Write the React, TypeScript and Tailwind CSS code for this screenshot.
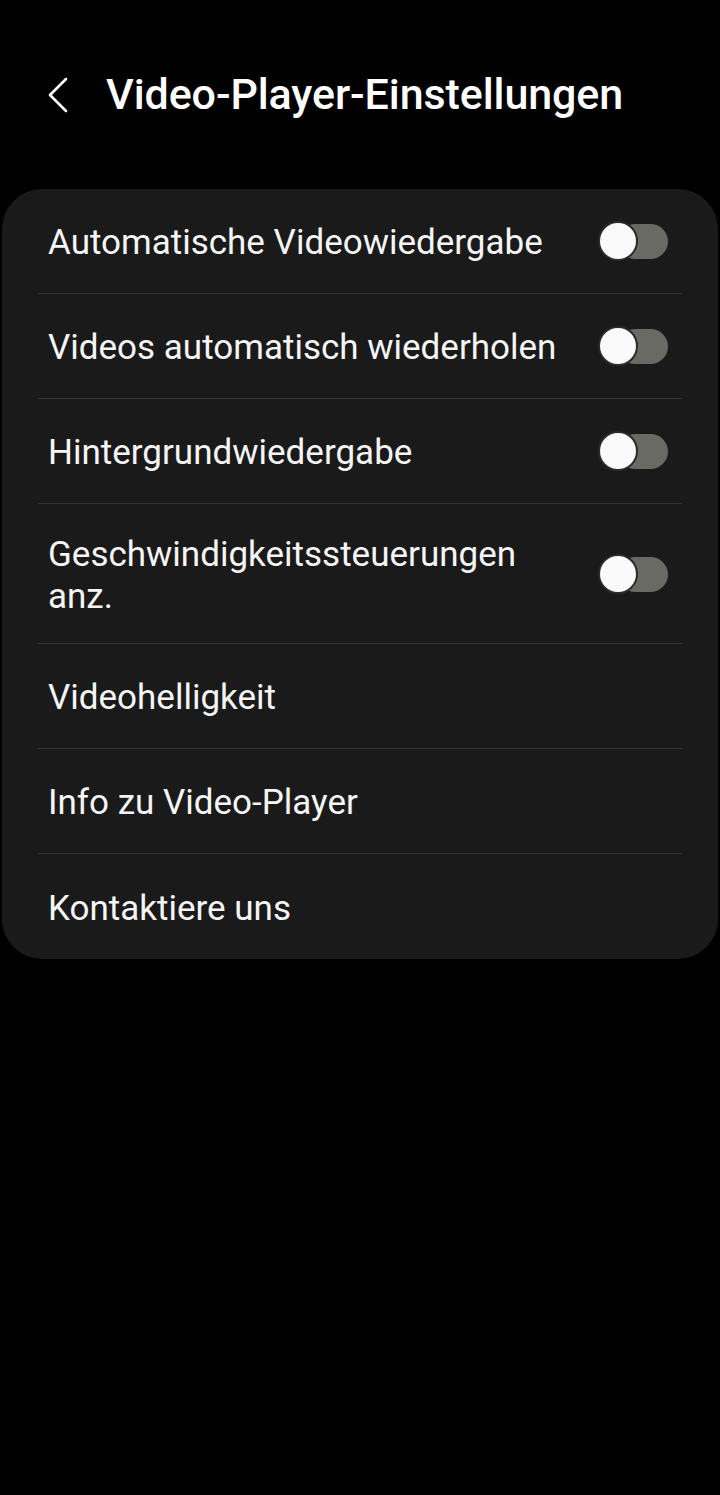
import React from "react";

type Item = { label: string; toggle?: boolean; tall?: boolean };

const items: Item[] = [
  { label: "Automatische Videowiedergabe", toggle: true },
  { label: "Videos automatisch wiederholen", toggle: true },
  { label: "Hintergrundwiedergabe", toggle: true },
  { label: "Geschwindigkeitssteuerungen anz.", toggle: true, tall: true },
  { label: "Videohelligkeit" },
  { label: "Info zu Video-Player" },
  { label: "Kontaktiere uns" },
];

function Toggle() {
  return (
    <div className="relative w-[70px] h-[40px] shrink-0">
      <div className="absolute left-[20px] top-[3px] w-[50px] h-[35px] rounded-full bg-[#6a6a65]" />
      <div className="absolute left-0 top-0 w-[40px] h-[40px] rounded-full bg-[#fafafa] border-2 border-[#2a2a2a]" />
    </div>
  );
}

export default function App() {
  return (
    <div className="min-h-[1495px] w-[720px] bg-black text-white" style={{ fontFamily: "Roboto, 'Noto Sans', sans-serif" }}>
      <div className="flex items-center h-[189px]">
        <div className="flex items-center h-[90px] w-full">
          <svg className="ml-[46px] w-[24px] h-[36px]" viewBox="0 0 24 36" fill="none">
            <path d="M20 2 L4 18 L20 34" stroke="white" strokeWidth="2.6" strokeLinecap="round" strokeLinejoin="round" />
          </svg>
          <h1 className="ml-[36px] text-[43px] font-medium tracking-[-0.1px] leading-none">Video-Player-Einstellungen</h1>
        </div>
      </div>
      <div className="mx-[2px] rounded-[40px] bg-[#1a1a1a] px-[36px]">
        {items.map((it, i) => (
          <div
            key={it.label}
            className={`flex items-center justify-between pl-[10px] pr-[14px] ${it.tall ? "h-[140px]" : "h-[105px]"} ${i < items.length - 1 ? "border-b border-[#333333]" : ""}`}
          >
            <span className="text-[35px] leading-[42px] text-[#f5f5f5] pt-[4px] pr-[40px]">{it.label}</span>
            {it.toggle && <Toggle />}
          </div>
        ))}
      </div>
    </div>
  );
}
